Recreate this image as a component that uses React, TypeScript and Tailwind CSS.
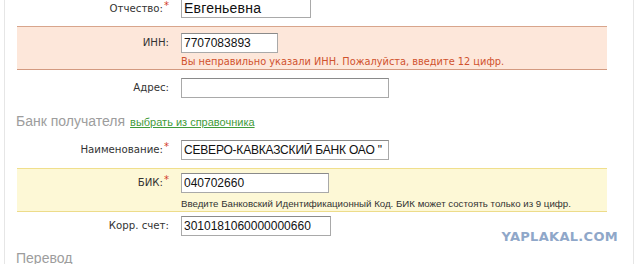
const label = 'w-[153px] shrink-0 text-right pr-[1px] text-[10.2px] text-[#333] leading-[14px]';
const input =
  'h-[20px] border border-[#a9a9a9] border-t-[#8a8a8a] bg-white px-[2px] text-[12px] text-[#111] leading-[18px] outline-none';
const arial = { fontFamily: '"Liberation Sans", Arial, sans-serif' };

const Star = () => <span className="relative -top-[3px] ml-[1px] text-[10px] text-[#d23b2a]">*</span>;

const App = () => {
  return (
    <div className="relative h-[264px] w-[640px] overflow-hidden bg-white" style={{ fontFamily: '"DejaVu Sans", sans-serif' }}>
      <div className="ml-[4px] mr-[6px] h-full border-x border-[#e6e6e6]">
        <div className="flex flex-col pl-[12px] pr-[26px]">
          {/* Отчество */}
          <div className="-mt-[2px] flex h-[20px] items-center gap-[11px]">
            <div className={`${label} pt-[2px]`}>
              Отчество:
              <Star />
            </div>
            <input className={`${input} w-[130px] text-[14px] tracking-[0.2px]`} style={arial} defaultValue="Евгеньевна" />
          </div>

          {/* ИНН error block */}
          <div className="mt-[8px] h-[44px] border-y border-t-[#d8a58c] border-b-[#d39a80] bg-[#fde7da] pt-[6px]">
            <div className="flex gap-[11px]">
              <div className={`${label} pt-[3px]`}>ИНН:</div>
              <div className="flex flex-col">
                <input className={`${input} w-[97px]`} style={arial} defaultValue="7707083893" />
                <div className="mt-[2px] whitespace-nowrap text-[9.8px] leading-[13px] text-[#d0522e]">
                  Вы неправильно указали ИНН. Пожалуйста, введите 12 цифр.
                </div>
              </div>
            </div>
          </div>

          {/* Адрес */}
          <div className="mt-[8px] flex h-[20px] items-center gap-[11px]">
            <div className={label}>Адрес:</div>
            <input className={`${input} w-[208px]`} />
          </div>

          {/* Банк получателя */}
          <div className="mt-[14px] -ml-[1px] flex h-[18px] items-baseline gap-[5px]" style={arial}>
            <span className="text-[14px] leading-[18px] text-[#9d9d9d]">Банк получателя</span>
            <a className="text-[11px] text-[#3f9b3a] underline underline-offset-1">выбрать из справочника</a>
          </div>

          {/* Наименование */}
          <div className="mt-[10px] flex h-[20px] items-center gap-[11px]">
            <div className={label}>
              Наименование:
              <Star />
            </div>
            <input
              className={`${input} w-[208px] text-[12px] tracking-[-0.2px]`}
              style={arial}
              defaultValue={'СЕВЕРО-КАВКАЗСКИЙ БАНК ОАО "'}
            />
          </div>

          {/* БИК hint block */}
          <div className="mt-[8px] h-[44px] border-y border-t-[#f0df8c] border-b-[#eddc8a] bg-[#fdf8d6] pt-[4px]">
            <div className="flex gap-[11px]">
              <div className={`${label} pt-[3px]`}>
                БИК:
                <Star />
              </div>
              <div className="flex flex-col">
                <input className={`${input} w-[148px]`} style={arial} defaultValue="040702660" />
                <div className="mt-[5px] whitespace-nowrap text-[9.7px] leading-[12px] text-[#333]" style={arial}>
                  Введите Банковский Идентификационный Код. БИК может состоять только из 9 цифр.
                </div>
              </div>
            </div>
          </div>

          {/* Корр. счет */}
          <div className="mt-[4px] flex h-[20px] items-center gap-[11px]">
            <div className={label}>Корр. счет:</div>
            <input className={`${input} w-[150px]`} style={arial} defaultValue="3010181060000000660" />
            <div className="ml-auto mr-[-11px] mt-[22px] text-[13px] font-bold tracking-[0.3px] text-[#8fa7c9]">
              YAPLAKAL.COM
            </div>
          </div>

          {/* Перевод */}
          <div className="mt-[13px] -ml-[1px] text-[14px] leading-[18px] text-[#9d9d9d]" style={arial}>
            Перевод
          </div>
        </div>
      </div>
    </div>
  );
};

export default App;
